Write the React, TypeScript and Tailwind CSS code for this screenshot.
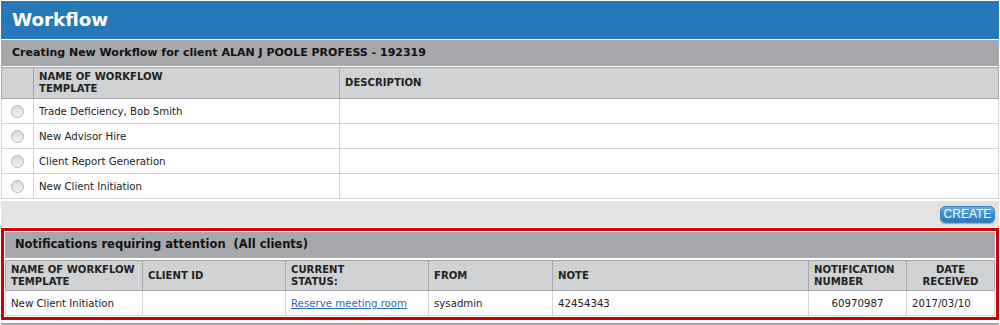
const templates = [
  "Trade Deficiency, Bob Smith",
  "New Advisor Hire",
  "Client Report Generation",
  "New Client Initiation",
];

function Radio() {
  return (
    <span className="inline-block align-middle w-[13px] h-[13px] rounded-full border border-[#b4b4b4] bg-gradient-to-b from-[#d8d8d8] to-[#f4f4f4]" />
  );
}

const th = "border border-[#a7a8ab] text-left align-middle font-bold uppercase text-[10.1px] leading-[12px] px-[5px] text-[#222]";
const td = "border border-[#d3d4d6] align-middle text-[10.2px] leading-[12px] px-[5px] pt-px text-[#222]";

export default function App() {
  return (
    <div className="w-[1000px] h-[325px] overflow-hidden bg-white pt-px px-px font-['DejaVu_Sans',Verdana,sans-serif] text-[#222]">
      <div className="h-[38px] bg-[#2679b9] flex items-center pl-[11px]">
        <h1 className="text-white font-bold text-[18.3px] leading-none">Workflow</h1>
      </div>
      <div className="mt-px h-[26px] bg-[#a7a8ab] flex items-center pl-[11px]">
        <span className="font-bold text-[11px] text-[#111]">
          Creating New Workflow for client ALAN J POOLE PROFESS - 192319
        </span>
      </div>

      <table className="mt-px w-[998px] border-collapse table-fixed">
        <colgroup>
          <col className="w-[32px]" />
          <col className="w-[306px]" />
          <col />
        </colgroup>
        <thead>
          <tr className="h-[31px] bg-[#d1d2d4]">
            <th className={th}></th>
            <th className={th}>
              Name of Workflow
              <br />
              Template
            </th>
            <th className={th}>Description</th>
          </tr>
        </thead>
        <tbody>
          {templates.map((t) => (
            <tr key={t} className="h-[25px]">
              <td className={td + " text-center"}>
                <Radio />
              </td>
              <td className={td}>{t}</td>
              <td className={td}></td>
            </tr>
          ))}
        </tbody>
      </table>

      <div className="mt-[2px] h-[26px] bg-[#e3e3e3] flex items-center justify-end pr-[4px]">
        <button className="h-[17px] w-[55px] rounded-[5px] border border-[#3d7fb8] bg-gradient-to-b from-[#6aaee3] via-[#3a8fd0] to-[#2a78bb] text-white text-[12px] leading-none font-['Liberation_Sans',Arial,sans-serif] shadow-[0_1px_1px_rgba(0,0,0,0.25)]">
          CREATE
        </button>
      </div>

      <div className="mt-px border-[3px] border-[#cc0000] p-px">
        <div className="h-[26px] bg-[#a7a8ab] flex items-center pl-[10px]">
          <span className="font-bold text-[11.5px] text-[#111] whitespace-pre">
            Notifications requiring attention  (All clients)
          </span>
        </div>
        <table className="mt-[2px] w-full border-collapse table-fixed">
          <colgroup>
            <col className="w-[137px]" />
            <col className="w-[143px]" />
            <col className="w-[143px]" />
            <col className="w-[124px]" />
            <col className="w-[256px]" />
            <col className="w-[98px]" />
            <col />
          </colgroup>
          <thead>
            <tr className="h-[30px] bg-[#d1d2d4]">
              <th className={th}>
                Name of Workflow
                <br />
                Template
              </th>
              <th className={th}>Client ID</th>
              <th className={th}>
                Current
                <br />
                Status:
              </th>
              <th className={th}>From</th>
              <th className={th}>Note</th>
              <th className={th}>
                Notification
                <br />
                Number
              </th>
              <th className={th + " !text-center"}>
                Date
                <br />
                Received
              </th>
            </tr>
          </thead>
          <tbody>
            <tr className="h-[25px]">
              <td className={td}>New Client Initiation</td>
              <td className={td}></td>
              <td className={td}>
                <a href="#" className="text-[#2a6db5] underline">
                  Reserve meeting room
                </a>
              </td>
              <td className={td}>sysadmin</td>
              <td className={td}>42454343</td>
              <td className={td + " text-center"}>60970987</td>
              <td className={td}>2017/03/10</td>
            </tr>
          </tbody>
        </table>
      </div>

      <div className="mt-[3px] h-[10px] bg-[#a7a8ab]" />
    </div>
  );
}
